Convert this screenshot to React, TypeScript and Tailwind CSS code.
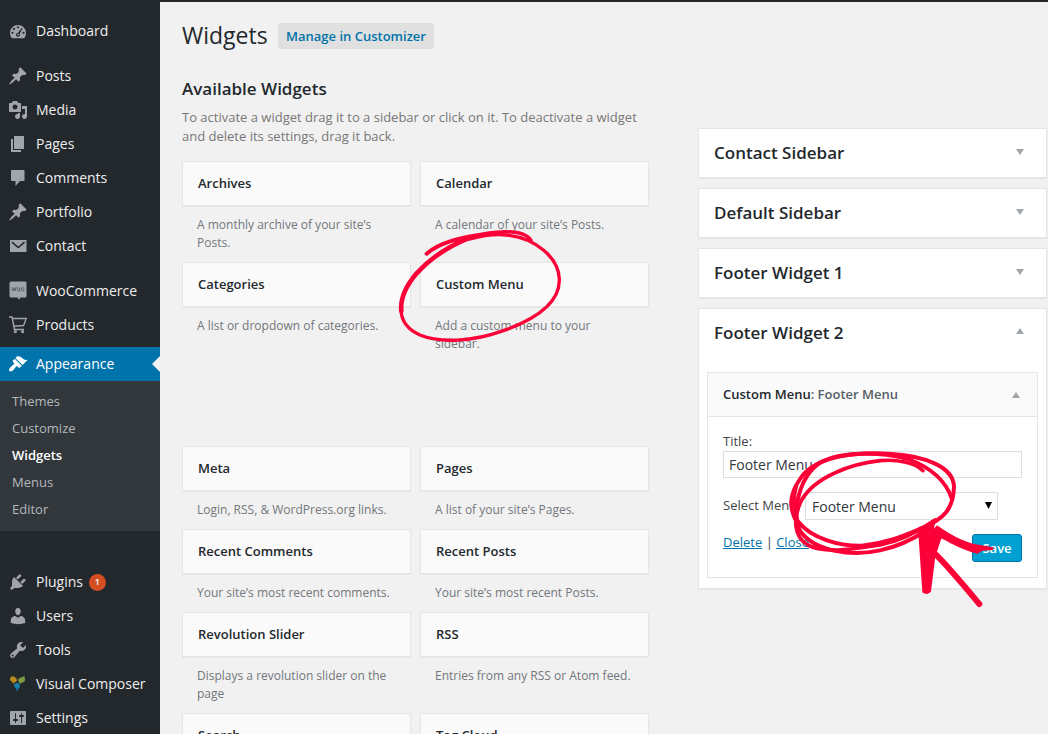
import type { ReactNode } from "react";

const icons: Record<string, ReactNode> = {
  dashboard: (
    <>
      <path d="M3.8 17.2h12.4A8 8 0 0 0 18 12a8 8 0 0 0-16 0c0 2 .7 3.800 1.800 5.200z" />
      <g fill="#23282d">
        <circle cx="10" cy="6.300" r="1.100" />
        <circle cx="6" cy="7.900" r="1.100" />
        <circle cx="4.500" cy="11.800" r="1.100" />
        <circle cx="15.500" cy="11.800" r="1.100" />
        <path d="M13.700 6.700l.9.500-2.900 5.600a2 2 0 1 1-3.100-.5c.4-.4 1-.6 1.600-.5z" />
      </g>
      <circle cx="10" cy="13.600" r=".9" />
    </>
  ),
  pin: (
    <path d="M10.44 3.02l1.820-1.820 6.360 6.350-1.830 1.820c-1.050-.68-2.480-.57-3.410.36l-.75.75c-.92.93-1.040 2.350-.35 3.410l-1.830 1.820-2.410-2.410-2.800 2.790c-.42.42-3.380 2.710-3.800 2.290s1.860-3.390 2.280-3.810l2.790-2.790L4.100 9.360l1.830-1.820c1.050.69 2.480.57 3.400-.36l.75-.75c.93-.92 1.050-2.350.36-3.410z" />
  ),
  media: (
    <path
      fillRule="evenodd"
      d="M13 11V4c0-.55-.45-1-1-1h-1.670L9 1H5L3.670 3H2c-.55 0-1 .45-1 1v7c0 .55.45 1 1 1h10c.55 0 1-.45 1-1zM7 4.500c1.380 0 2.500 1.120 2.500 2.500S8.380 9.500 7 9.500 4.500 8.380 4.500 7 5.620 4.500 7 4.500zM14 6h5v10.500c0 1.380-1.120 2.500-2.500 2.500S14 17.880 14 16.500s1.120-2.500 2.500-2.500c.17 0 .34.02.5.05V9h-3V6zm-4 8.050V13h2v3.500c0 1.380-1.120 2.500-2.500 2.500S7 17.880 7 16.500 8.120 14 9.500 14c.17 0 .34.02.5.05z"
    />
  ),
  page: <path d="M6 15V2h10v13H6zm-1 1h8v2H3V5h2v11z" />,
  comment: <path d="M4 2h11.500c.6 0 1 .4 1 1v9c0 .6-.4 1-1 1H12l-4.500 5v-5H4c-.6 0-1-.4-1-1V3c0-.6.400-1 1-1z" />,
  mail: (
    <>
      <path d="M2 4h16.500v12H2z" />
      <path d="M4 6.200l6.250 5.300 6.250-5.300" fill="none" stroke="#23282d" strokeWidth="1.600" />
    </>
  ),
  woo: (
    <>
      <path d="M3 .5h14A1.500 1.500 0 0 1 18.500 2v13A1.500 1.500 0 0 1 17 16.500h-4.500L11 18.800 9.500 16.500H3A1.500 1.500 0 0 1 1.500 15V2A1.500 1.500 0 0 1 3 .5z" />
      <g fill="none" stroke="#4a5056" strokeWidth=".8">
        <path d="M3.800 6l1 4 1.400-3.300 1 3.300 1.100-4.300" />
        <ellipse cx="10.700" cy="8.500" rx="1.200" ry="1.800" />
        <ellipse cx="14.600" cy="8.200" rx="1.300" ry="1.900" />
      </g>
    </>
  ),
  cart: (
    <g fill="none" stroke="currentColor" strokeWidth="1.400">
      <path d="M1 2h3l2.500 12.500H16M4.300 3.500h13.900L15.600 10.500 5.800 11.200" />
      <circle cx="7.300" cy="16.600" r="1" />
      <circle cx="14.600" cy="16.600" r="1" />
    </g>
  ),
  brush: (
    <path d="M14.480 11.060L7.410 3.990l1.500-1.500c.5-.56 2.300-.47 3.510.32 1.210.8 1.430 1.280 2.910 2.100 1.180.64 2.450 1.260 4.450.85zm-.71.71L6.700 4.700 4.930 6.470c-.39.39-.39 1.020 0 1.410l1.060 1.060c.39.39.39 1.030 0 1.420-.6.6-1.430 1.110-2.210 1.690-.35.26-.7.53-1.010.84C1.430 14.230.4 16.080 1.400 17.070c.99 1 2.840-.03 4.180-1.360.31-.31.58-.66.85-1.020.57-.78 1.080-1.610 1.690-2.210.39-.39 1.020-.39 1.410 0l1.060 1.060c.39.39 1.020.39 1.410 0z" />
  ),
  plug: (
    <path d="M13.110 4.360L9.870 7.600 8 5.730l3.240-3.240c.35-.34 1.050-.2 1.560.32.52.51.66 1.210.31 1.550zm-8 1.770l.91-1.120 9.010 9.010-1.190.84c-.71.71-2.630 1.160-3.820 1.160H6.140L4.900 17.260c-.59.59-1.540.59-2.120 0-.59-.58-.59-1.530 0-2.120l1.240-1.240v-3.880c0-1.130.4-3.190 1.090-3.890zm7.260 3.970l3.240-3.240c.34-.35 1.040-.21 1.550.31.52.51.66 1.210.31 1.550l-3.240 3.250z" />
  ),
  user: (
    <path d="M10 9.250c-2.270 0-2.730-3.440-2.730-3.440C7 4.020 7.820 2 9.970 2c2.160 0 2.980 2.020 2.710 3.810 0 0-.41 3.440-2.680 3.440zm0 2.570L12.720 10c2.390 0 4.520 2.330 4.520 4.530v2.490s-3.650 1.130-7.240 1.130c-3.650 0-7.240-1.130-7.240-1.130v-2.490c0-2.250 1.940-4.480 4.470-4.480z" />
  ),
  wrench: (
    <path
      fillRule="evenodd"
      d="M16.680 9.770c-1.340 1.340-3.300 1.670-4.950.99l-5.410 6.520c-.99.99-2.590.99-3.580 0s-.99-2.590 0-3.570l6.520-5.420c-.68-1.650-.35-3.610.99-4.950 1.280-1.280 3.120-1.620 4.720-1.060l-2.890 2.890 2.820 2.820 2.860-2.870c.53 1.580.18 3.390-1.080 4.650zM3.810 16.210c.4.39 1.040.39 1.430 0 .4-.4.4-1.040 0-1.430-.39-.4-1.030-.4-1.430 0-.39.39-.39 1.030 0 1.430z"
    />
  ),
  composer: (
    <>
      <path fill="#b98a1c" d="M2 4.500A2.700 2.700 0 0 1 6.500 3l2.200 1.500v3L6.500 8.600 5 10.200 4.500 7.800A3 3 0 0 1 2 4.500z" />
      <path fill="#7f9a43" d="M10 6.200C10 4.500 11.500 4 13 3.500l3.500-1.500L17 6c-.3 1.800-1.600 2.400-3 2.500L12 10z" />
      <path fill="#157fa8" d="M6 11.500c0-1.500 1.300-2.500 3-2.500 2 0 3 1.400 3 3 0 1-.5 1.600-1.200 2.200L8.600 17.700 8.300 14C7 13.800 6 12.900 6 11.500z" />
    </>
  ),
  settings: (
    <path
      fillRule="evenodd"
      d="M18 16V4c0-.55-.45-1-1-1H3c-.55 0-1 .45-1 1v12c0 .55.45 1 1 1h14c.55 0 1-.45 1-1zM8 11h1c.55 0 1 .45 1 1s-.45 1-1 1H8v1.500c0 .28-.22.5-.5.5s-.5-.22-.5-.5V13H6c-.55 0-1-.45-1-1s.45-1 1-1h1V5.500c0-.28.22-.5.5-.5s.5.22.5.5V11zm5-2h-1c-.55 0-1-.45-1-1s.45-1 1-1h1V5.500c0-.28.22-.5.5-.5s.5.22.5.5V7h1c.55 0 1 .45 1 1s-.45 1-1 1h-1v5.500c0 .28-.22.5-.5.5s-.5-.22-.5-.5V9z"
    />
  ),
};

function MenuItem({ icon, label, badge, active }: { icon: string; label: string; badge?: string; active?: boolean }) {
  return (
    <a
      className={
        active
          ? "relative flex h-[34px] shrink-0 items-center bg-[#0073aa] pl-2 text-white"
          : "flex h-[34px] shrink-0 items-center pl-2 text-[#eee]"
      }
    >
      <svg viewBox="0 0 20 20" className={active ? "size-5 fill-current" : "size-5 fill-current text-[#a0a5aa]"}>
        {icons[icon]}
      </svg>
      <span className="ml-2 text-[14px] leading-5 whitespace-nowrap">{label}</span>
      {badge && (
        <span className="ml-[6px] flex size-[17px] items-center justify-center rounded-full bg-[#d54e21] text-[9px] font-semibold text-white">
          {badge}
        </span>
      )}
      {active && (
        <svg viewBox="0 0 8 16" className="absolute top-[9px] right-0 h-4 w-2 fill-[#f1f1f1]">
          <path d="M8 0v16L0 8z" />
        </svg>
      )}
    </a>
  );
}

function Sidebar() {
  return (
    <nav className="flex h-[734px] w-40 shrink-0 flex-col overflow-hidden bg-[#23282d] pt-[14px]">
      <MenuItem icon="dashboard" label="Dashboard" />
      <div className="mt-[11px] flex flex-col">
        <MenuItem icon="pin" label="Posts" />
        <MenuItem icon="media" label="Media" />
        <MenuItem icon="page" label="Pages" />
        <MenuItem icon="comment" label="Comments" />
        <MenuItem icon="pin" label="Portfolio" />
        <MenuItem icon="mail" label="Contact" />
      </div>
      <div className="mt-[11px] flex flex-col">
        <MenuItem icon="woo" label="WooCommerce" />
        <MenuItem icon="cart" label="Products" />
      </div>
      <div className="mt-[5px] flex flex-col">
        <MenuItem icon="brush" label="Appearance" active />
        <ul className="h-[150px] bg-[#32373c] pt-[7px] pl-3 text-[13px] leading-[27px] text-[#b4b9be]">
          <li>Themes</li>
          <li>Customize</li>
          <li className="font-semibold text-white">Widgets</li>
          <li>Menus</li>
          <li>Editor</li>
        </ul>
      </div>
      <div className="mt-[34px] flex flex-col">
        <MenuItem icon="plug" label="Plugins" badge="1" />
        <MenuItem icon="user" label="Users" />
        <MenuItem icon="wrench" label="Tools" />
        <MenuItem icon="composer" label="Visual Composer" />
        <MenuItem icon="settings" label="Settings" />
      </div>
    </nav>
  );
}

function Widget({ title, children }: { title: string; children?: ReactNode }) {
  return (
    <div>
      <div className="flex h-[45px] items-center border border-[#e5e5e5] bg-[#fafafa] pl-[15px] text-[13px] font-semibold text-[#23282d] shadow-[0_1px_1px_rgba(0,0,0,0.04)]">
        {title}
      </div>
      <p className="px-[15px] py-[10px] text-[12px] leading-[18px] text-[#72777c]">{children}</p>
    </div>
  );
}

function Triangle({ up }: { up?: boolean }) {
  return (
    <svg viewBox="0 0 8 6" className="h-[6px] w-2 fill-[#a0a5aa]">
      <path d={up ? "M4 0l4 6H0z" : "M0 0h8L4 6z"} />
    </svg>
  );
}

function AreaHeader({ title, up }: { title: string; up?: boolean }) {
  return (
    <div className="flex h-12 items-center justify-between pr-[22px] pl-[15px]">
      <h3 className="text-[17px] leading-6 font-semibold text-[#23282d]">{title}</h3>
      <div className={up ? "pb-1" : "pb-[2px]"}>
        <Triangle up={up} />
      </div>
    </div>
  );
}

const panel = "border border-[#e5e5e5] bg-white shadow-[0_1px_1px_rgba(0,0,0,0.04)]";

function WidgetForm() {
  return (
    <div className="mx-2 mt-[15px] h-[206px] border border-[#e5e5e5] text-[13px] text-[#444]">
      <div className="flex h-[44px] items-center justify-between border-b border-[#e5e5e5] bg-[#fafafa] pr-[17px] pl-[15px]">
        <h4 className="font-semibold text-[#23282d]">
          Custom Menu<span className="text-[#555d66]">: Footer Menu</span>
        </h4>
        <Triangle up />
      </div>
      <div className="pt-[15px] pr-[15px] pl-[15px]">
        <div className="h-[19px] leading-[19px]">Title:</div>
        <div className="flex h-[27px] items-center border border-[#ddd] pl-[5px] text-[14px] text-[#32373c]">Footer Menu</div>
        <div className="mt-[14px] flex h-7 items-center">
          <span className="w-[82px] whitespace-nowrap">Select Menu:</span>
          <div className="flex h-7 w-[193px] items-center justify-between border border-[#ddd] bg-white pr-[5px] pl-[6px] text-[14px] text-[#32373c]">
            Footer Menu
            <svg viewBox="0 0 7 7" className="mb-px size-[7px] fill-black">
              <path d="M0 0h7L3.500 7z" />
            </svg>
          </div>
        </div>
        <div className="mt-[14px] flex items-start justify-between">
          <div className="leading-4">
            <a className="text-[#0073aa] underline">Delete</a> | <a className="text-[#0073aa] underline">Close</a>
          </div>
          <button className="h-7 w-[50px] rounded-[3px] border border-[#0073aa] bg-[#00a0d2] pt-px text-[13px] font-semibold text-white">
            Save
          </button>
        </div>
      </div>
    </div>
  );
}

function Annotations() {
  return (
    <svg
      viewBox="0 0 1048 734"
      className="pointer-events-none absolute inset-0 h-[734px] w-[1048px]"
      fill="none"
      stroke="#fb0137"
      strokeLinecap="round"
      strokeLinejoin="round"
    >
      <g transform="translate(390 225) scale(.33333)">
        <path strokeWidth="10" d="M240 42C290 28 320 26 350 30C440 40 506 100 508 162C510 235 430 285 340 317C250 350 150 355 90 330C50 312 34 285 33 255" />
        <path strokeWidth="14" d="M34 258C30 215 50 180 80 145C125 95 185 60 240 38" />
        <path strokeWidth="10" d="M240 38C300 18 400 8 423 46" />
        <path strokeWidth="12" d="M110 86C150 50 220 34 300 26" />
      </g>
      <g transform="translate(785 445) scale(.33333)">
        <path strokeWidth="11" d="M414 77C390 52 335 42 285 47C200 56 90 95 50 165C20 225 30 275 65 298C115 328 205 312 285 300C350 287 400 260 450 225" />
        <path strokeWidth="12" d="M40 230C80 280 160 303 230 302C300 296 350 275 405 252C480 222 505 190 507 125C505 65 420 33 320 27C220 20 100 30 50 95C10 150 10 190 40 240" />
        <path strokeWidth="12" d="M500 160C480 100 430 65 370 42C290 20 170 20 110 50C40 95 20 200 45 258C90 320 200 335 285 316C340 304 385 282 420 258" />
        <path strokeWidth="13" d="M32 125C22 165 28 205 40 240" />
        <path strokeWidth="10" d="M405 252C450 266 510 295 580 312" />
        <path fill="#fb0137" strokeWidth="8" d="M403 250L416 440Q425 446 434 438L447 335L467 273Q525 310 577 322L590 313L622 311L585 304C545 299 495 273 457 246L440 265L446 235Z" />
        <path strokeWidth="18" d="M452 328C495 370 535 420 583 477" />
      </g>
    </svg>
  );
}

export default function App() {
  return (
    <div className="relative flex h-[734px] w-[1048px] overflow-hidden bg-[#f1f1f1] font-['Open_Sans',sans-serif]">
      <Sidebar />
      <main className="flex h-[734px] grow items-start overflow-hidden border-t-2 border-[#23282d] pl-[22px]">
        <section className="w-[467px] shrink-0 pt-[21px]">
          <div className="flex h-[26px] items-center">
            <h1 className="w-24 pb-[2px] text-[23px] leading-[24px] text-[#23282d]">Widgets</h1>
            <a className="flex h-[26px] w-[156px] items-center justify-center rounded-[2px] bg-[#e0e0e0] pt-[2px] text-[13px] font-semibold text-[#0073aa]">
              Manage in Customizer
            </a>
          </div>
          <h2 className="mt-[28px] text-[17px] leading-6 font-semibold text-[#23282d]">Available Widgets</h2>
          <p className="mt-[7px] text-[13px] leading-[19px] text-[#777]">
            To activate a widget drag it to a sidebar or click on it. To deactivate a widget and delete its settings, drag it back.
          </p>
          <div className="mt-[15px] grid grid-cols-[229px_229px] gap-x-[9px]">
            <Widget title="Archives">A monthly archive of your site’s Posts.</Widget>
            <Widget title="Calendar">A calendar of your site’s Posts.</Widget>
            <Widget title="Categories">A list or dropdown of categories.</Widget>
            <Widget title="Custom Menu">Add a custom menu to your sidebar.</Widget>
            <div className="col-span-2 h-[83px]" />
            <Widget title="Meta">Login, RSS, &amp; WordPress.org links.</Widget>
            <Widget title="Pages">A list of your site’s Pages.</Widget>
            <Widget title="Recent Comments">Your site’s most recent comments.</Widget>
            <Widget title="Recent Posts">Your site’s most recent Posts.</Widget>
            <Widget title="Revolution Slider">Displays a revolution slider on the page</Widget>
            <Widget title="RSS">Entries from any RSS or Atom feed.</Widget>
            <Widget title="Search" />
            <Widget title="Tag Cloud" />
          </div>
        </section>
        <section className="ml-[49px] flex w-[349px] shrink-0 flex-col gap-[10px] pt-[126px]">
          <div className={panel}>
            <AreaHeader title="Contact Sidebar" />
          </div>
          <div className={panel}>
            <AreaHeader title="Default Sidebar" />
          </div>
          <div className={panel}>
            <AreaHeader title="Footer Widget 1" />
          </div>
          <div className={`${panel} h-[281px]`}>
            <AreaHeader title="Footer Widget 2" up />
            <WidgetForm />
          </div>
        </section>
      </main>
      <Annotations />
    </div>
  );
}
